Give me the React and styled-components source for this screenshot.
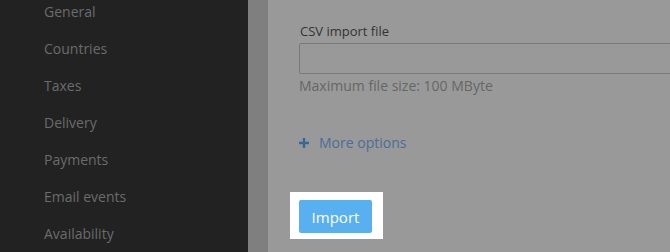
import React from 'react';
import styled, { createGlobalStyle } from 'styled-components';

const GlobalStyle = createGlobalStyle`
  html, body {
    margin: 0;
    padding: 0;
    overflow: hidden;
  }
  body {
    font-family: "Open Sans", "Liberation Sans", sans-serif;
  }
`;

const NAV_ITEMS = ['General', 'Countries', 'Taxes', 'Delivery', 'Payments', 'Email events', 'Availability'];

const Page = styled.div`
  display: flex;
  width: 670px;
  height: 252px;
  overflow: hidden;
`;

const Sidebar = styled.nav`
  width: 248px;
  flex-shrink: 0;
  background: #222222;
`;

const NavList = styled.ul`
  list-style: none;
  margin: -7px 0 0;
  padding: 0 0 0 44px;
`;

const NavItem = styled.li`
  height: 37px;
  line-height: 37px;
  font-size: 14px;
  color: #6b6b6b;
`;

const Gutter = styled.div`
  width: 20px;
  flex-shrink: 0;
  background: #7f7f7f;
`;

const Content = styled.main`
  flex: 1;
  background: #999999;
  padding: 22px 0 0 31px;
  display: flex;
  flex-direction: column;
`;

const Label = styled.label`
  font-size: 13px;
  color: #333333;
  line-height: 18px;
  padding-left: 1px;
  margin-bottom: 3px;
`;

const FileBox = styled.div`
  height: 29px;
  margin-right: -20px;
  border: 1px solid #7a7a7a;
  border-radius: 2px;
`;

const Hint = styled.div`
  font-size: 14px;
  color: #666666;
  line-height: 20px;
  margin-top: 2px;
`;

const MoreLink = styled.div`
  display: flex;
  align-items: center;
  gap: 10px;
  margin-top: 37px;
  font-size: 14px;
  line-height: 20px;
  color: #486f98;
`;

const Spotlight = styled.div`
  align-self: flex-start;
  margin: 39px 0 0 -9px;
  padding: 8px 11px 6px 9px;
  background: #ffffff;
`;

const ImportButton = styled.button`
  display: block;
  width: 73px;
  height: 33px;
  border: none;
  border-radius: 2px;
  background: #58b0f0;
  color: #ffffff;
  font-family: "Open Sans", "Liberation Sans", sans-serif;
  font-size: 15px;
  padding: 0;
`;

const PlusIcon = () => (
  <svg width="10" height="10" viewBox="0 0 10 10">
    <path d="M5 0v10M0 5h10" stroke="#3a6896" strokeWidth="2.4" />
  </svg>
);

const App = () => (
  <Page>
    <GlobalStyle />
    <Sidebar>
      <NavList>
        {NAV_ITEMS.map((item) => (
          <NavItem key={item}>{item}</NavItem>
        ))}
      </NavList>
    </Sidebar>
    <Gutter />
    <Content>
      <Label>CSV import file</Label>
      <FileBox />
      <Hint>Maximum file size: 100 MByte</Hint>
      <MoreLink>
        <PlusIcon />
        More options
      </MoreLink>
      <Spotlight>
        <ImportButton>Import</ImportButton>
      </Spotlight>
    </Content>
  </Page>
);

export default App;
